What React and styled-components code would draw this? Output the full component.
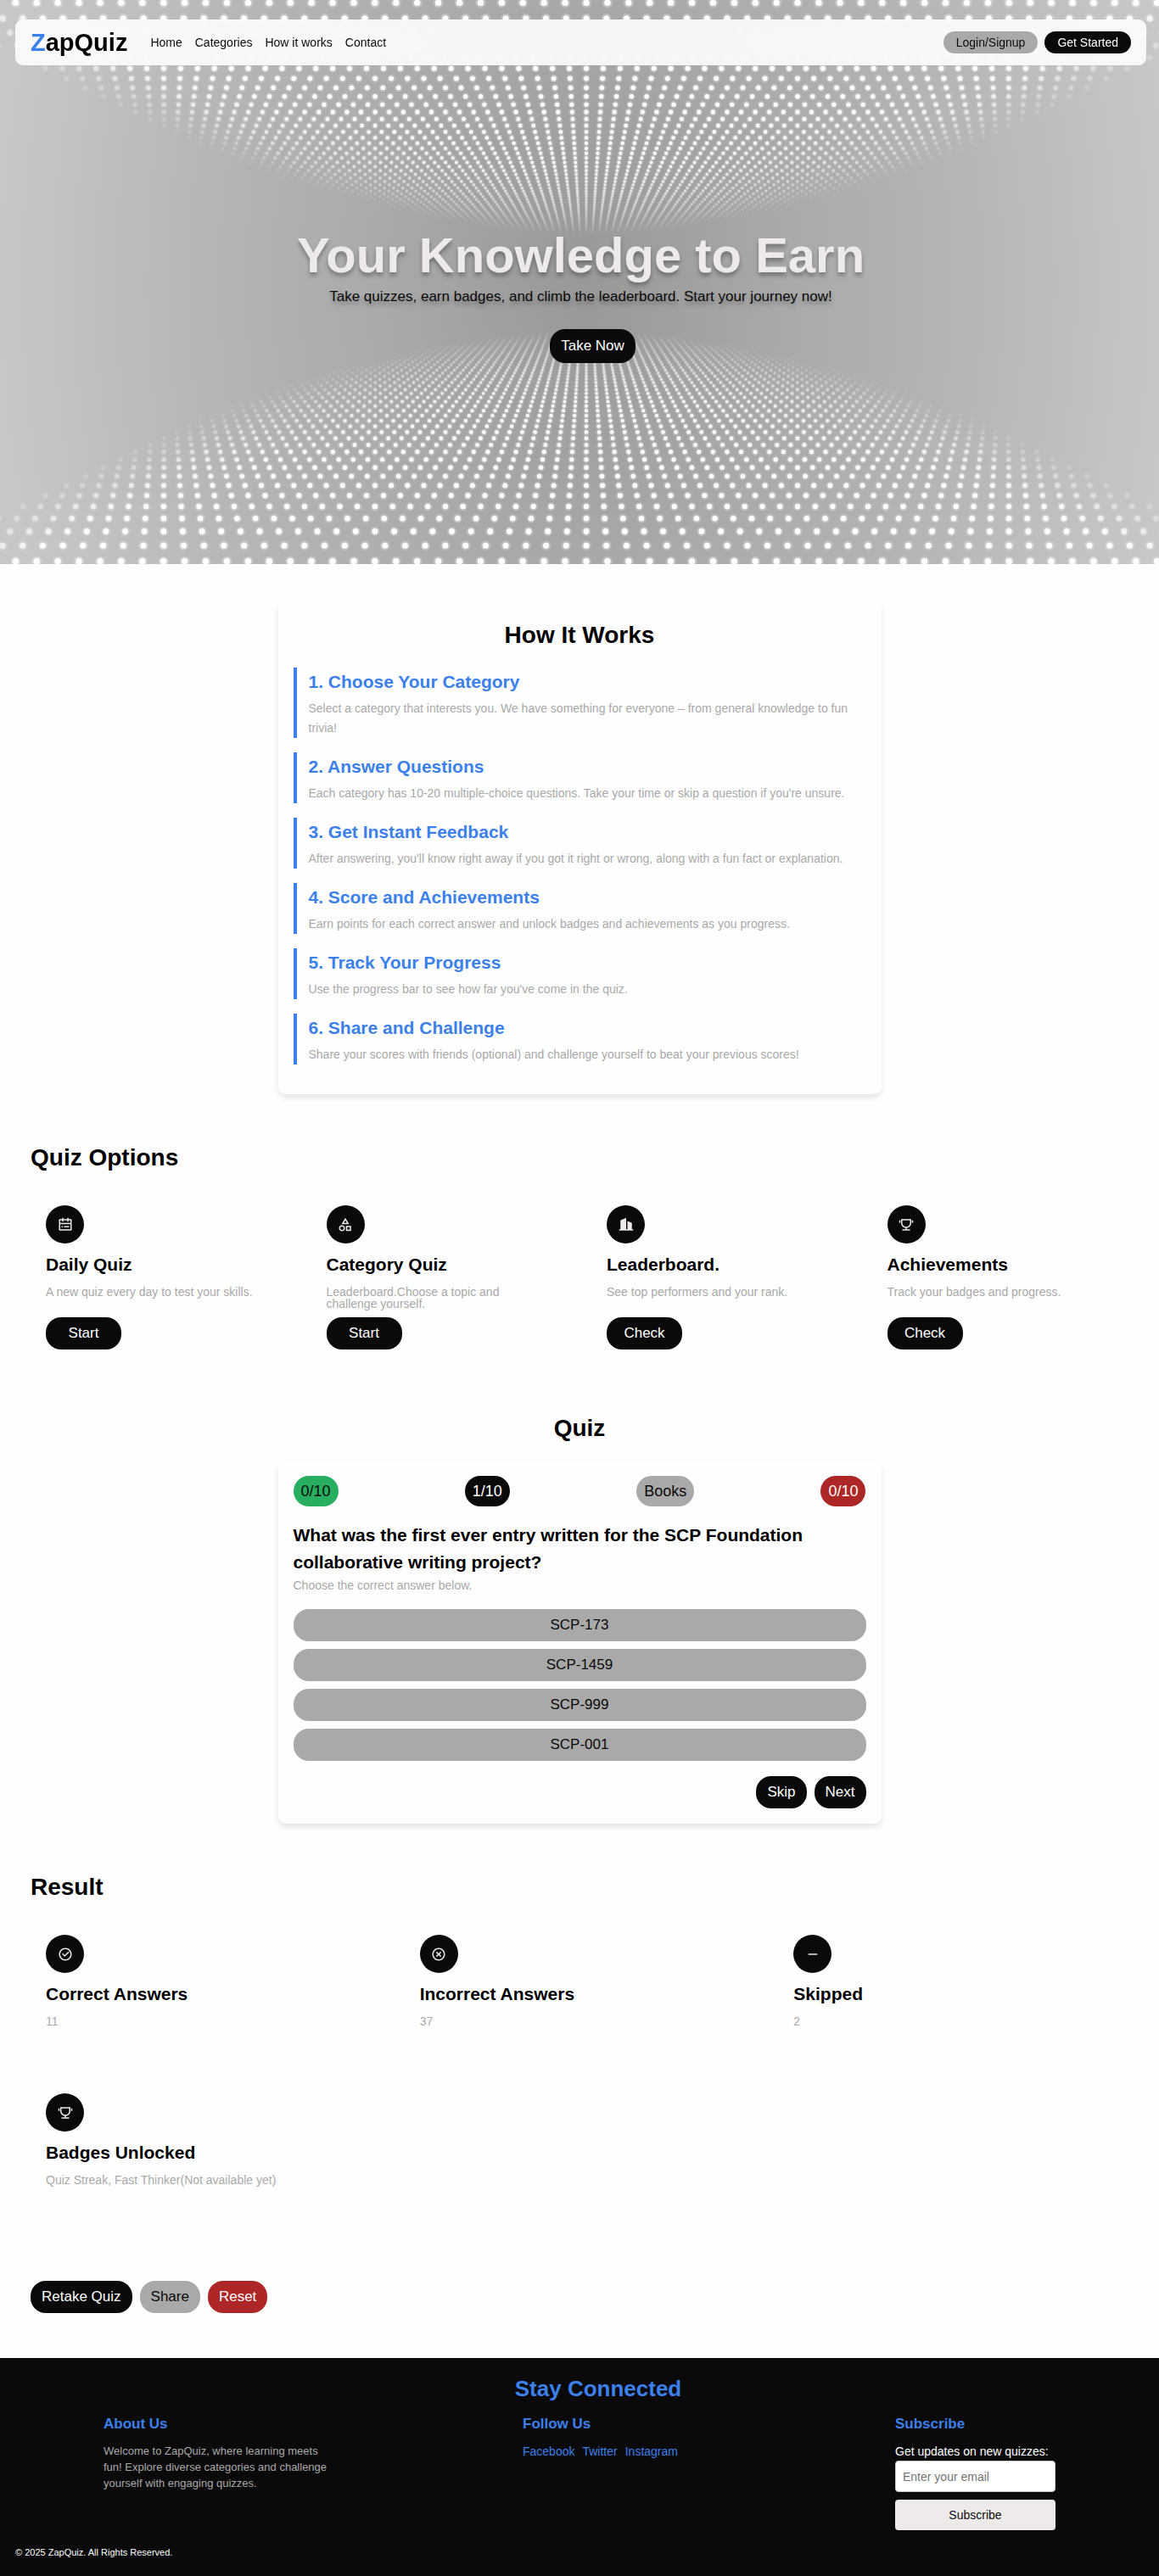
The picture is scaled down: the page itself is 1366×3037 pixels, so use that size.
import React from "react";
import styled, { createGlobalStyle } from "styled-components";
import {
  RiCalendarTodoLine,
  RiShapesLine,
  RiBuilding2Fill,
  RiTrophyLine,
  RiCheckboxCircleLine,
  RiCloseCircleLine,
  RiSubtractLine,
} from "react-icons/ri";

const color = {
  ink: "#0a0a0a",
  grey: "#a9a9a9",
  blue: "#3c80ec",
  green: "#27ae60",
  red: "#ae2727",
  soft: "#eeeaea",
  page: "#fefefe",
};

const GlobalStyle = createGlobalStyle`
  * { box-sizing: border-box; margin: 0; padding: 0; }
  body {
    background: ${color.page};
    color: #000;
    font-family: "Liberation Sans", Arial, Helvetica, sans-serif;
  }
  button, input { font-family: inherit; }
`;

/* ---------- shared parts ---------- */

const tones = {
  dark: { bg: color.ink, fg: "#fff" },
  grey: { bg: color.grey, fg: color.ink },
  green: { bg: color.green, fg: color.ink },
  red: { bg: color.red, fg: "#fff" },
};

const Button = styled.button`
  height: ${(p) => (p.$size === "large" ? 40 : 38)}px;
  min-width: ${(p) => (p.$wide ? 89 : 0)}px;
  padding: 0 13px;
  border: 0;
  border-radius: 18px;
  background: ${(p) => tones[p.$tone || "dark"].bg};
  color: ${(p) => tones[p.$tone || "dark"].fg};
  font-size: 17px;
  line-height: 20px;
  cursor: pointer;
`;

const ButtonRow = styled.div`
  display: flex;
  gap: 9px;
  justify-content: ${(p) => (p.$end ? "flex-end" : "flex-start")};
`;

const SectionTitle = styled.h2`
  margin-bottom: 22px;
  font-size: 28px;
  line-height: 32px;
  text-align: ${(p) => (p.$center ? "center" : "left")};
`;

const Section = styled.section`
  padding: 59px 36px 0;
`;

const Panel = styled.div`
  max-width: 711px;
  margin: 0 auto;
  padding: ${(p) => (p.$roomy ? "24px 18px 35px" : "18px")};
  border-radius: 9px;
  background: ${color.page};
  box-shadow: 0 4px 7px rgba(0, 0, 0, 0.1);
`;

/* ---------- hero ---------- */

const Hero = styled.div`
  position: relative;
  overflow: hidden;
  background: radial-gradient(
    ellipse 51% 150% at 50.5% 50%,
    #989898 0%,
    #aaaaaa 36%,
    #b4b4b4 62%,
    #c7c7c7 100%
  );
`;

const Backdrop = styled.svg`
  position: absolute;
  inset: 0;
  width: 100%;
  height: 100%;
`;

const HeroBody = styled.div`
  position: relative;
  padding: 23px 15px 237px 18px;
`;

const Header = styled.header`
  display: flex;
  align-items: center;
  height: 54px;
  padding: 0 18px;
  border-radius: 9px;
  background: rgba(255, 255, 255, 0.88);
  backdrop-filter: blur(9px);
`;

const Logo = styled.a`
  margin-right: 27px;
  color: #000;
  font-size: 29px;
  font-weight: 700;
  text-decoration: none;
`;

const LogoMark = styled.span`
  color: ${color.blue};
`;

const Nav = styled.nav`
  display: flex;
  flex: 1;
  gap: 15px;
`;

const NavLink = styled.a`
  color: ${color.ink};
  font-size: 14px;
  line-height: 16px;
  text-decoration: none;
`;

const HeaderActions = styled.div`
  display: flex;
  gap: 8px;
`;

const HeaderButton = styled(Button)`
  height: 26px;
  padding: 0 15px;
  border-radius: 13px;
  font-size: 14px;
  line-height: 16px;
`;

const HeroText = styled.div`
  display: flex;
  flex-direction: column;
  align-items: center;
  padding-top: 192px;
  text-align: center;
`;

const HeroTitle = styled.h1`
  margin-bottom: 6px;
  color: ${color.soft};
  font-size: 58px;
  line-height: 64px;
  text-shadow: 0 4px 5px rgba(0, 0, 0, 0.3);
`;

const HeroSubtitle = styled.p`
  margin-bottom: 27px;
  color: ${color.ink};
  font-size: 17px;
  line-height: 22px;
  text-shadow: 0 4px 5px rgba(0, 0, 0, 0.3);
`;

const HeroAction = styled.div`
  padding-left: 28px;
`;

/* A floor and a ceiling of evenly spaced lights, seen in perspective. */
const CENTER_X = 691;
const COLUMNS = 32;
const SPREAD = [0, 0.2, 0.4, 0.55, 0.7, 0.84, 0.92, 1];

/* Brightness falls off with depth, sooner towards the sides, and at the rim. */
function brightness(u, depth) {
  const vanish = 0.0088 * Math.sqrt(1 - (0.8 * u) ** 2);
  const far = Math.max(0, Math.min(1, (vanish - depth) / 0.004));
  const rim = u <= 0.84 ? 1 : 1 - ((u - 0.84) / 0.16) * 0.65;
  return far * rim;
}

const ROWS = Array.from({ length: 49 }, (_, k) => {
  const depth = 0.002593 + 0.00013 * k;
  const reach = 1 / depth;
  const half = SPREAD.map((u) => ({ u, light: brightness(u, depth) }));
  const stops = [
    ...half.slice(1).reverse().map(({ u, light }) => ({ at: 0.5 - u / 2, light })),
    ...half.map(({ u, light }) => ({ at: 0.5 + u / 2, light })),
  ];
  return { k, reach, step: reach * 0.0646, size: reach * 0.0195, stops };
});

const PLANES = [
  { name: "ceiling", horizon: 389, sign: -1 },
  { name: "floor", horizon: 276, sign: 1 },
];

function LightField() {
  return (
    <Backdrop viewBox="0 0 1366 665" preserveAspectRatio="xMidYMid slice" aria-hidden="true">
      <defs>
        {ROWS.map(({ k, step, stops }) => (
          <linearGradient
            key={k}
            id={`row${k}`}
            gradientUnits="userSpaceOnUse"
            x1={CENTER_X - COLUMNS * step}
            x2={CENTER_X + COLUMNS * step}
            y1="0"
            y2="0"
          >
            {stops.map(({ at, light }) => (
              <stop key={at} offset={at} stopColor="#fff" stopOpacity={light} />
            ))}
          </linearGradient>
        ))}
      </defs>
      {PLANES.map(({ name, horizon, sign }) => (
        <g key={name} strokeLinecap="round" fill="none">
          {ROWS.map(({ k, reach, step, size }) => {
            const y = horizon + sign * reach;
            const row = {
              x1: CENTER_X - COLUMNS * step,
              x2: CENTER_X + COLUMNS * step + 1,
              y1: y,
              y2: y,
              stroke: `url(#row${k})`,
              strokeDasharray: `0 ${step}`,
            };
            return (
              <g key={k}>
                <line {...row} strokeWidth={size * 1.6} opacity="0.25" />
                <line {...row} strokeWidth={size} />
              </g>
            );
          })}
        </g>
      ))}
    </Backdrop>
  );
}

/* ---------- how it works ---------- */

const HowSection = styled.section`
  padding: 44px 36px 0;
`;

const Steps = styled.ol`
  display: flex;
  flex-direction: column;
  gap: 17px;
  list-style: none;
`;

const Step = styled.li`
  padding-left: 14px;
  border-left: 4px solid ${color.blue};
`;

const StepTitle = styled.h3`
  margin-bottom: 4px;
  color: ${color.blue};
  font-size: 21px;
  line-height: 33px;
`;

const StepText = styled.p`
  color: ${color.grey};
  font-size: 14px;
  line-height: 23px;
`;

/* ---------- cards ---------- */

const CardGrid = styled.div`
  display: grid;
  grid-template-columns: repeat(${(p) => p.$columns}, 1fr);
  gap: 28px;
`;

const Card = styled.article`
  display: flex;
  flex-direction: column;
  align-items: flex-start;
  min-height: 159px;
  padding: 18px 24px 18px 18px;
`;

const IconDisc = styled.span`
  display: flex;
  align-items: center;
  justify-content: center;
  width: 45px;
  height: 45px;
  border-radius: 50%;
  background: ${color.ink};
  color: ${color.soft};
  font-size: 18px;
`;

const CardTitle = styled.h3`
  margin: 13px 0;
  font-size: 21px;
  line-height: 24px;
`;

const CardText = styled.p`
  color: ${color.grey};
  font-size: 14px;
  line-height: 14px;
`;

const CardAction = styled.div`
  margin-top: auto;
  padding-top: 9px;
`;

/* ---------- quiz ---------- */

const Status = styled.div`
  display: flex;
  justify-content: space-between;
  margin-bottom: 18px;
`;

const Pill = styled.span`
  padding: 0 9px;
  border-radius: 18px;
  background: ${(p) => tones[p.$tone].bg};
  color: ${(p) => tones[p.$tone].fg};
  font-size: 18px;
  line-height: 36px;
`;

const Question = styled.h3`
  margin-bottom: 4px;
  font-size: 21px;
  line-height: 32px;
`;

const Answers = styled.div`
  display: flex;
  flex-direction: column;
  gap: 9px;
  margin: 21px 0 18px;
`;

/* ---------- result ---------- */

const ResultSection = styled(Section)`
  padding-bottom: 53px;
`;

const ResultActions = styled(ButtonRow)`
  margin-top: 80px;
`;

/* ---------- footer ---------- */

const Footer = styled.footer`
  padding: 21px 18px;
  background: ${color.ink};
  color: #fff;
`;

const FooterTitle = styled.h2`
  margin-bottom: 17px;
  padding-left: 44px;
  color: ${color.blue};
  font-size: 26px;
  line-height: 30px;
  text-align: center;
`;

const FooterColumns = styled.div`
  display: grid;
  grid-template-columns: 494fr 439fr 189px;
  margin-bottom: 20px;
  padding: 0 104px;
`;

const FooterHeading = styled.h3`
  margin-bottom: 12px;
  color: ${color.blue};
  font-size: 17px;
  line-height: 20px;
`;

const About = styled.p`
  max-width: 266px;
  color: ${color.grey};
  font-size: 13px;
  line-height: 19px;
`;

const Social = styled.div`
  display: flex;
  gap: 9px;
`;

const SocialLink = styled.a`
  color: ${color.blue};
  font-size: 14px;
  line-height: 21px;
  text-decoration: none;
`;

const SubscribeForm = styled.form`
  display: flex;
  flex-direction: column;
`;

const Label = styled.label`
  font-size: 14px;
  line-height: 21px;
`;

const EmailInput = styled.input`
  height: 37px;
  margin-bottom: 9px;
  padding: 0 8px;
  border: 1px solid #ccc;
  border-radius: 4px;
  background: #fff;
  font-size: 14px;

  &::placeholder {
    color: #757575;
  }
`;

const SubscribeButton = styled.button`
  height: 36px;
  border: 0;
  border-radius: 4px;
  background: ${color.soft};
  color: ${color.ink};
  font-size: 14px;
  cursor: pointer;
`;

const Copyright = styled.p`
  font-size: 11px;
  line-height: 13px;
`;

/* ---------- content ---------- */

const NAV = ["Home", "Categories", "How it works", "Contact"];

const STEPS = [
  ["1. Choose Your Category", "Select a category that interests you. We have something for everyone – from general knowledge to fun trivia!"],
  ["2. Answer Questions", "Each category has 10-20 multiple-choice questions. Take your time or skip a question if you're unsure."],
  ["3. Get Instant Feedback", "After answering, you'll know right away if you got it right or wrong, along with a fun fact or explanation."],
  ["4. Score and Achievements", "Earn points for each correct answer and unlock badges and achievements as you progress."],
  ["5. Track Your Progress", "Use the progress bar to see how far you've come in the quiz."],
  ["6. Share and Challenge", "Share your scores with friends (optional) and challenge yourself to beat your previous scores!"],
];

const OPTIONS = [
  { icon: RiCalendarTodoLine, title: "Daily Quiz", text: "A new quiz every day to test your skills.", action: "Start" },
  { icon: RiShapesLine, title: "Category Quiz", text: "Leaderboard.Choose a topic and challenge yourself.", action: "Start" },
  { icon: RiBuilding2Fill, title: "Leaderboard.", text: "See top performers and your rank.", action: "Check" },
  { icon: RiTrophyLine, title: "Achievements", text: "Track your badges and progress.", action: "Check" },
];

const RESULTS = [
  { icon: RiCheckboxCircleLine, title: "Correct Answers", text: "11" },
  { icon: RiCloseCircleLine, title: "Incorrect Answers", text: "37" },
  { icon: RiSubtractLine, title: "Skipped", text: "2" },
  { icon: RiTrophyLine, title: "Badges Unlocked", text: "Quiz Streak, Fast Thinker(Not available yet)" },
];

const ANSWERS = ["SCP-173", "SCP-1459", "SCP-999", "SCP-001"];

function InfoCard({ icon: Icon, title, text, action }) {
  return (
    <Card>
      <IconDisc>
        <Icon aria-hidden="true" />
      </IconDisc>
      <CardTitle>{title}</CardTitle>
      <CardText>{text}</CardText>
      {action && (
        <CardAction>
          <Button type="button" $wide>{action}</Button>
        </CardAction>
      )}
    </Card>
  );
}

export default function App() {
  return (
    <>
      <GlobalStyle />
      <Hero>
        <LightField />
        <HeroBody>
          <Header>
            <Logo href="#">
              <LogoMark>Z</LogoMark>apQuiz
            </Logo>
            <Nav>
              {NAV.map((item) => (
                <NavLink key={item} href="#">{item}</NavLink>
              ))}
            </Nav>
            <HeaderActions>
              <HeaderButton type="button" $tone="grey">Login/Signup</HeaderButton>
              <HeaderButton type="button">Get Started</HeaderButton>
            </HeaderActions>
          </Header>
          <HeroText>
            <HeroTitle>Your Knowledge to Earn</HeroTitle>
            <HeroSubtitle>
              Take quizzes, earn badges, and climb the leaderboard. Start your journey now!
            </HeroSubtitle>
            <HeroAction>
              <Button type="button" $size="large">Take Now</Button>
            </HeroAction>
          </HeroText>
        </HeroBody>
      </Hero>

      <main>
        <HowSection>
          <Panel $roomy>
            <SectionTitle $center>How It Works</SectionTitle>
            <Steps>
              {STEPS.map(([title, text]) => (
                <Step key={title}>
                  <StepTitle>{title}</StepTitle>
                  <StepText>{text}</StepText>
                </Step>
              ))}
            </Steps>
          </Panel>
        </HowSection>

        <Section>
          <SectionTitle>Quiz Options</SectionTitle>
          <CardGrid $columns={4}>
            {OPTIONS.map((item) => (
              <InfoCard key={item.title} {...item} />
            ))}
          </CardGrid>
        </Section>

        <Section>
          <SectionTitle $center>Quiz</SectionTitle>
          <Panel>
            <Status>
              <Pill $tone="green">0/10</Pill>
              <Pill $tone="dark">1/10</Pill>
              <Pill $tone="grey">Books</Pill>
              <Pill $tone="red">0/10</Pill>
            </Status>
            <Question>
              What was the first ever entry written for the SCP Foundation collaborative writing project?
            </Question>
            <CardText>Choose the correct answer below.</CardText>
            <Answers>
              {ANSWERS.map((answer) => (
                <Button key={answer} type="button" $tone="grey">{answer}</Button>
              ))}
            </Answers>
            <ButtonRow $end>
              <Button type="button">Skip</Button>
              <Button type="button">Next</Button>
            </ButtonRow>
          </Panel>
        </Section>

        <ResultSection>
          <SectionTitle>Result</SectionTitle>
          <CardGrid $columns={3}>
            {RESULTS.map((item) => (
              <InfoCard key={item.title} {...item} />
            ))}
          </CardGrid>
          <ResultActions>
            <Button type="button">Retake Quiz</Button>
            <Button type="button" $tone="grey">Share</Button>
            <Button type="button" $tone="red">Reset</Button>
          </ResultActions>
        </ResultSection>
      </main>

      <Footer>
        <FooterTitle>Stay Connected</FooterTitle>
        <FooterColumns>
          <div>
            <FooterHeading>About Us</FooterHeading>
            <About>
              Welcome to ZapQuiz, where learning meets fun! Explore diverse categories and challenge
              yourself with engaging quizzes.
            </About>
          </div>
          <div>
            <FooterHeading>Follow Us</FooterHeading>
            <Social>
              <SocialLink href="#">Facebook</SocialLink>
              <SocialLink href="#">Twitter</SocialLink>
              <SocialLink href="#">Instagram</SocialLink>
            </Social>
          </div>
          <div>
            <FooterHeading>Subscribe</FooterHeading>
            <SubscribeForm>
              <Label htmlFor="email">Get updates on new quizzes:</Label>
              <EmailInput id="email" type="email" placeholder="Enter your email" />
              <SubscribeButton type="button">Subscribe</SubscribeButton>
            </SubscribeForm>
          </div>
        </FooterColumns>
        <Copyright>© 2025 ZapQuiz. All Rights Reserved.</Copyright>
      </Footer>
    </>
  );
}
